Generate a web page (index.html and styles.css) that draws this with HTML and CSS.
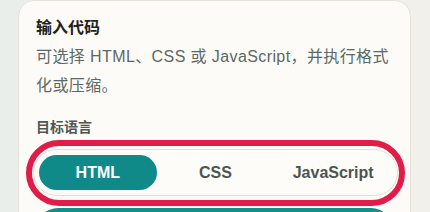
FILE: index.html
```html
<!DOCTYPE html>
<html lang="zh-CN">
<head>
  <meta charset="UTF-8">
  <meta name="viewport" content="width=device-width, initial-scale=1.0">
  <title>输入代码</title>
  <link rel="stylesheet" href="styles.css">
</head>
<body>
  <div class="panel">
    <h2 class="panel-title">输入代码</h2>
    <p class="panel-desc">可选择 HTML、CSS 或 JavaScript，并执行格式化或压缩。</p>

    <div class="field-label">目标语言</div>
    <div class="highlight">
      <div class="lang-switch">
        <button class="lang-btn active">HTML</button>
        <button class="lang-btn">CSS</button>
        <button class="lang-btn">JavaScript</button>
      </div>
    </div>

    <!-- 下に続く実行ボタン（上端だけ見えている） -->
    <div class="run-bar"></div>
  </div>
</body>
</html>
```

FILE: styles.css
```css
* {
  margin: 0;
  padding: 0;
  box-sizing: border-box;
}

body {
  height: 100vh;
  overflow: hidden;
  background: linear-gradient(90deg, #eaeeeb 0%, #eff0ec 60%, #f2f0eb 100%);
  font-family: "Liberation Sans", "Noto Sans CJK SC", sans-serif;
  padding: 0 19px 0 18px;
}

.panel {
  background-color: #fcfbf7;
  border: 1px solid #e6e2da;
  border-radius: 16px;
  padding: 13px 17px 20px 17px;
}

.panel-title {
  font-family: "Noto Sans CJK SC", sans-serif;
  font-size: 16px;
  font-weight: 700;
  line-height: 24px;
  color: #1e2321;
}

.panel-desc {
  margin-top: 4px;
  font-size: 16px;
  line-height: 29px;
  letter-spacing: 0.4px;
  color: #5d6864;
}

.field-label {
  margin-top: 16px;
  font-family: "Noto Sans CJK SC", sans-serif;
  font-size: 14px;
  font-weight: 700;
  line-height: 20px;
  color: #4d5754;
}

/* 強調用の赤い枠 */
.highlight {
  margin: 4px -12px 0 -10px;
  border: 6px solid #e11c48;
  border-radius: 40px;
  padding: 3px 1px 4px 1px;
}

.lang-switch {
  display: grid;
  grid-template-columns: repeat(3, 1fr);
  padding: 5px;
  border: 1px solid #e3dfd6;
  border-radius: 999px;
  background-color: #fdfcf8;
}

.lang-btn {
  height: 35px;
  border: none;
  border-radius: 999px;
  background: transparent;
  font-family: "Liberation Sans", sans-serif;
  font-size: 16px;
  font-weight: 700;
  color: #4b5653;
}

.lang-btn.active {
  background-color: #0f8a89;
  color: #ffffff;
}

.run-bar {
  height: 44px;
  margin-top: 2px;
  border-radius: 22px;
  background-color: #138f8b;
}
```
